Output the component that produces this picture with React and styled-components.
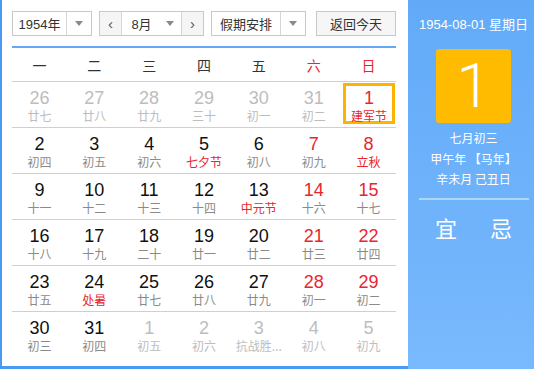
import React from 'react';
import styled, { createGlobalStyle } from 'styled-components';

const Global = createGlobalStyle`
  html, body { margin: 0; padding: 0; background: #fff; }
  body { font-family: "Liberation Sans", Arial, "Noto Sans CJK SC", sans-serif; }
  * { box-sizing: border-box; }
`;

const Widget = styled.div`
  display: flex;
  width: 534px;
  height: 369px;
  overflow: hidden;
`;

const Main = styled.div`
  flex: none;
  width: 408px;
  height: 369px;
  border-left: 2px solid #4a9bf0;
  border-bottom: 3px solid #4a9bf0;
  padding: 11px 12px 0 10px;
  background: #fff;
  display: flex;
  flex-direction: column;
`;

const Toolbar = styled.div`
  display: flex;
  height: 25px;
  font-size: 13px;
  color: #333;
`;

const SelectBox = styled.div`
  display: flex;
  width: ${p => p.$w}px;
  height: 25px;
  border: 1px solid #c8c8c8;
  background: #fff;
  margin-left: ${p => p.$ml || 0}px;
`;

const SelectText = styled.div`
  flex: 1;
  display: flex;
  align-items: center;
  justify-content: center;
  border-right: ${p => (p.$divider ? '1px solid #d6d6d6' : 'none')};
  padding-left: ${p => p.$pl || 0}px;
`;

const ArrowCell = styled.div`
  flex: none;
  width: ${p => p.$w || 24}px;
  display: flex;
  align-items: center;
  justify-content: center;
  &::after {
    content: '';
    border-left: 4px solid transparent;
    border-right: 4px solid transparent;
    border-top: 5px solid #8a8a8a;
  }
`;

const StepButton = styled.div`
  flex: none;
  width: 22px;
  display: flex;
  align-items: center;
  justify-content: center;
  background: #f5f5f5;
  color: #555;
  font-size: 15px;
  border-left: ${p => (p.$side === 'right' ? '1px solid #d6d6d6' : 'none')};
  border-right: ${p => (p.$side === 'left' ? '1px solid #d6d6d6' : 'none')};
`;

const TodayButton = styled.div`
  margin-left: auto;
  width: 80px;
  height: 25px;
  border: 1px solid #c8c8c8;
  background: #f6f6f6;
  display: flex;
  align-items: center;
  justify-content: center;
  color: #333;
`;

const BlueLine = styled.div`
  height: 2px;
  margin-top: 10px;
  background: #62a8f2;
`;

const Grid7 = styled.div`
  display: grid;
  grid-template-columns: repeat(7, 1fr);
`;

const HeaderRow = styled(Grid7)`
  height: 34px;
  border-bottom: 1px solid #cfcfcf;
  font-family: "Noto Sans CJK SC", sans-serif;
  font-size: 14px;
`;

const HeaderCell = styled.div`
  display: flex;
  align-items: center;
  justify-content: center;
  color: ${p => (p.$weekend ? '#e8262f' : '#333')};
`;

const WeekRow = styled(Grid7)`
  height: 46px;
  border-bottom: ${p => (p.$last ? 'none' : '1px solid #cfcfcf')};
`;

const Cell = styled.div`
  display: flex;
  flex-direction: column;
  align-items: center;
  padding-top: ${p => (p.$selected ? 5 : 6)}px;
  height: ${p => (p.$selected ? 41 : 45)}px;
  margin: ${p => (p.$selected ? '1px 1px 3px 2px' : '0')};
  box-shadow: ${p => (p.$selected ? 'inset 0 0 0 3px #fdb300' : 'none')};
`;

const DayNum = styled.div`
  font-size: 18px;
  line-height: 20px;
  color: ${p => (p.$other ? '#bdbdbd' : p.$red ? '#e8262f' : '#111')};
`;

const Lunar = styled.div`
  font-family: "Noto Sans CJK SC", sans-serif;
  font-size: 12px;
  line-height: 16px;
  white-space: nowrap;
  color: ${p => (p.$other ? '#bdbdbd' : p.$red ? '#e8262f' : '#8a8a8a')};
`;

const Side = styled.div`
  flex: 1;
  background: linear-gradient(180deg, #62aaf8 0%, #79b9fd 100%);
  display: flex;
  flex-direction: column;
  align-items: center;
  padding-left: 5px;
  padding-top: 16px;
  color: #fff;
`;

const DateLine = styled.div`
  font-size: 13px;
  line-height: 18px;
  white-space: nowrap;
  font-family: "Liberation Sans", Arial, "Noto Sans CJK SC", sans-serif;
`;

const BigDay = styled.div`
  margin-top: 15px;
  width: 75px;
  height: 74px;
  background: #ffbb00;
  border-radius: 3px;
  display: flex;
  align-items: center;
  justify-content: center;
  font-family: Roboto, "Liberation Sans", sans-serif;
  font-weight: 300;
  font-size: 62px;
  line-height: 1;
  color: #fff;
`;

const LunarInfo = styled.div`
  margin-top: 5px;
  font-family: "Noto Sans CJK SC", sans-serif;
  font-size: 12px;
  line-height: 20.5px;
  text-align: center;
  white-space: nowrap;
`;

const SideRule = styled.div`
  margin-top: 8px;
  width: 110px;
  height: 2px;
  background: rgba(255, 255, 255, 0.45);
`;

const YiJi = styled.div`
  margin-top: 12px;
  display: flex;
  gap: 33px;
  font-family: "Noto Sans CJK SC", sans-serif;
  font-size: 22px;
  line-height: 30px;
`;

const weekdays = ['一', '二', '三', '四', '五', '六', '日'];

// [day, lunar, other month, red lunar (festival), selected]
const rows = [
  [[26, '廿七', 1], [27, '廿八', 1], [28, '廿九', 1], [29, '三十', 1], [30, '初一', 1], [31, '初二', 1], [1, '建军节', 0, 1, 1]],
  [[2, '初四'], [3, '初五'], [4, '初六'], [5, '七夕节', 0, 1], [6, '初八'], [7, '初九'], [8, '立秋', 0, 1]],
  [[9, '十一'], [10, '十二'], [11, '十三'], [12, '十四'], [13, '中元节', 0, 1], [14, '十六'], [15, '十七']],
  [[16, '十八'], [17, '十九'], [18, '二十'], [19, '廿一'], [20, '廿二'], [21, '廿三'], [22, '廿四']],
  [[23, '廿五'], [24, '处暑', 0, 1], [25, '廿七'], [26, '廿八'], [27, '廿九'], [28, '初一'], [29, '初二']],
  [[30, '初三'], [31, '初四'], [1, '初五', 1], [2, '初六', 1], [3, '抗战胜...', 1], [4, '初八', 1], [5, '初九', 1]],
];

export default function App() {
  return (
    <>
      <Global />
      <Widget>
        <Main>
          <Toolbar>
            <SelectBox $w={80}>
              <SelectText $divider>1954年</SelectText>
              <ArrowCell $w={24} />
            </SelectBox>
            <SelectBox $w={105} $ml={7}>
              <StepButton $side="left">&lsaquo;</StepButton>
              <SelectText $pl={2}>8月</SelectText>
              <ArrowCell $w={22} />
              <StepButton $side="right">&rsaquo;</StepButton>
            </SelectBox>
            <SelectBox $w={95} $ml={7}>
              <SelectText $divider>假期安排</SelectText>
              <ArrowCell $w={24} />
            </SelectBox>
            <TodayButton>返回今天</TodayButton>
          </Toolbar>
          <BlueLine />
          <HeaderRow>
            {weekdays.map((w, i) => (
              <HeaderCell key={w} $weekend={i >= 5}>{w}</HeaderCell>
            ))}
          </HeaderRow>
          {rows.map((row, ri) => (
            <WeekRow key={ri} $last={ri === rows.length - 1}>
              {row.map(([d, l, other, fest, sel], ci) => {
                const weekend = ci >= 5;
                return (
                  <Cell key={ci} $selected={!!sel}>
                    <DayNum $other={!!other} $red={weekend || sel}>{d}</DayNum>
                    <Lunar $other={!!other} $red={!!fest}>{l}</Lunar>
                  </Cell>
                );
              })}
            </WeekRow>
          ))}
        </Main>
        <Side>
          <DateLine>1954-08-01 星期日</DateLine>
          <BigDay>1</BigDay>
          <LunarInfo>
            七月初三<br />
            甲午年 【马年】<br />
            辛未月 己丑日
          </LunarInfo>
          <SideRule />
          <YiJi>
            <span>宜</span>
            <span>忌</span>
          </YiJi>
        </Side>
      </Widget>
    </>
  );
}
